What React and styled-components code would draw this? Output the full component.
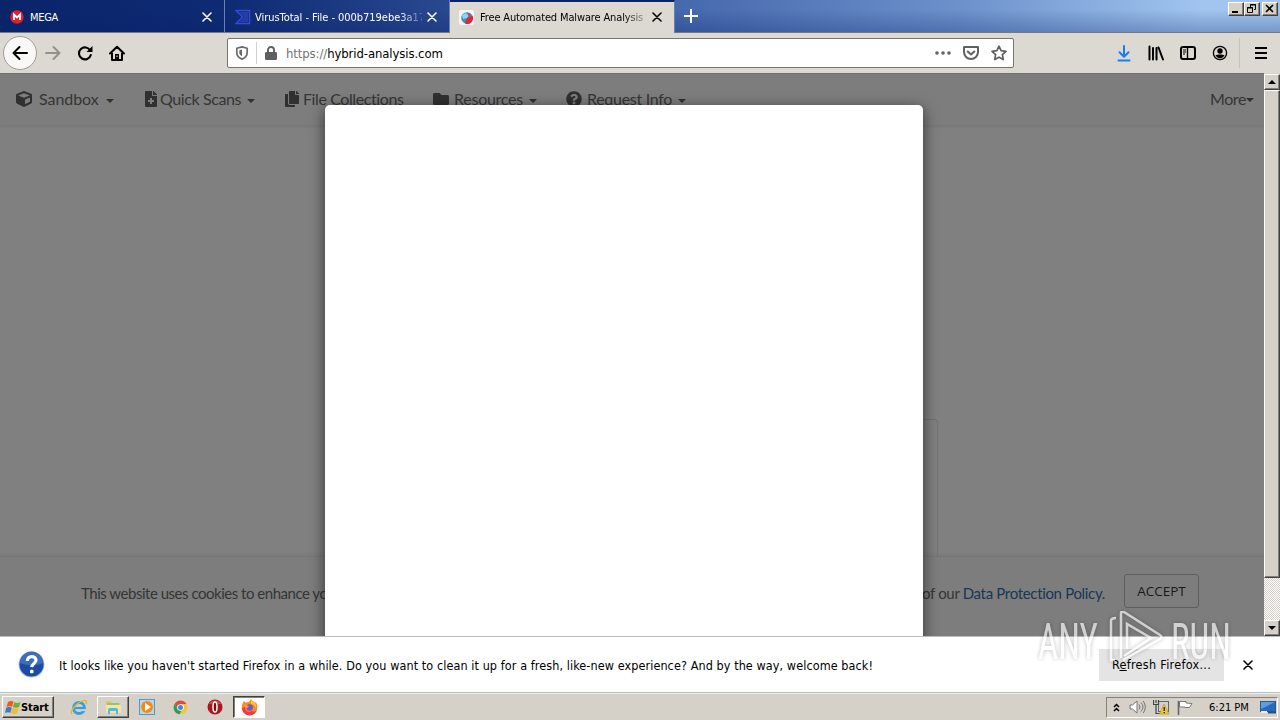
import React from "react";
import styled, { createGlobalStyle } from "styled-components";
import {
  FaCube,
  FaFileMedical,
  FaCopy,
  FaFolder,
  FaQuestionCircle,
} from "react-icons/fa";

const NAV = [
  { label: "Sandbox", icon: <FaCube />, width: 127, gap: 22, text: 67, spacing: -0.05, caret: true },
  { label: "Quick Scans", icon: <FaFileMedical />, width: 141, gap: 16, text: 87, spacing: -0.4, caret: true },
  { label: "File Collections", icon: <FaCopy />, width: 149, gap: 18, text: 110, spacing: -0.4 },
  { label: "Resources", icon: <FaFolder />, width: 133, gap: 20, text: 75, spacing: -0.25, caret: true },
  { label: "Request Info", icon: <FaQuestionCircle />, width: 130, gap: 20, text: 91, spacing: -0.3, caret: true },
];

const Cross = ({ color = "#000" }) => (
  <svg width="10" height="10" viewBox="0 0 10 10">
    <path d="M1 1l8 8M9 1L1 9" stroke={color} strokeWidth="1.6" strokeLinecap="round" />
  </svg>
);

const MegaIcon = () => (
  <svg width="14" height="14" viewBox="0 0 14 14">
    <circle cx="7" cy="7" r="6.7" fill="#e3202c" />
    <path d="M4 10V4.5l3 3 3-3V10" fill="none" stroke="#fff" strokeWidth="1.9" />
  </svg>
);

const VirusTotalIcon = () => (
  <svg width="16" height="16" viewBox="0 0 16 16">
    <path d="M1 1.500h13.500v13H1L7.500 8z" fill="none" stroke="#3447e0" strokeWidth="1.500" />
    <path d="M4 3h9v10H4l5-5z" fill="#22409c" />
  </svg>
);

const HybridIcon = () => (
  <svg width="15" height="15" viewBox="0 0 15 15">
    <rect width="15" height="15" rx="2" fill="#f1f5f8" />
    <circle cx="8" cy="8" r="5.8" fill="#368fc7" />
    <path d="M8 8l5.500-2.300A5.800 5.800 0 0 1 6 13.500z" fill="#e32632" />
    <path d="M3 5l4-2 3 2-2 3-4 1z" fill="#91d4eb" />
    <path d="M8 3l4 1-2 3z" fill="#d33c51" />
  </svg>
);

const BackIcon = () => (
  <svg width="16" height="16" viewBox="0 0 16 16">
    <path d="M15 8H1.5M7.5 2l-6 6 6 6" fill="none" stroke="currentColor" strokeWidth="2" strokeLinecap="round" strokeLinejoin="round" />
  </svg>
);

const ForwardIcon = () => (
  <svg width="16" height="16" viewBox="0 0 16 16">
    <path d="M1 8h13.5M8.5 2l6 6-6 6" fill="none" stroke="#92908d" strokeWidth="2" strokeLinecap="round" strokeLinejoin="round" />
  </svg>
);

const ReloadIcon = () => (
  <svg width="16" height="16" viewBox="0 0 16 16">
    <path d="M13.3 5.5A6 6 0 1 0 13.8 10" fill="none" stroke="#000" strokeWidth="2.1" strokeLinecap="round" />
    <path d="M15.5 1v6h-6z" fill="#000" />
  </svg>
);

const HomeIcon = () => (
  <svg width="16" height="16" viewBox="0 0 16 16">
    <path d="M1 8.5L8 1.7l7 6.8M3 8v6.9h10V8" fill="none" stroke="#000" strokeWidth="2" strokeLinecap="round" strokeLinejoin="round" />
    <path d="M6 9h4v6H6z" fill="#000" />
    <path d="M7.4 10.5h1.2V12H7.4z" fill="#dcd9d3" />
  </svg>
);

const ShieldIcon = () => (
  <svg width="14" height="14" viewBox="0 0 14 14">
    <path d="M7 .9l5.2 1.3v4.3c0 3.2-2.5 5.5-5.2 6.6C4.3 12 1.8 9.7 1.8 6.5V2.2z" fill="none" stroke="#6a6a6a" strokeWidth="1.7" strokeLinejoin="round" />
    <path d="M7 3.6v6.6C5.3 9.2 4.3 8 4.3 6.4V4.2z" fill="#6a6a6a" />
  </svg>
);

const LockIcon = () => (
  <svg width="12" height="14" viewBox="0 0 12 14">
    <path d="M3 6.5V4a3 3 0 0 1 6 0v2.5" fill="none" stroke="#5f5f5f" strokeWidth="1.9" />
    <rect y="6" width="12" height="8" rx="1.3" fill="#5f5f5f" />
  </svg>
);

const DotsIcon = () => (
  <svg width="16" height="16" viewBox="0 0 16 16" fill="#636363">
    <circle cx="2" cy="8" r="1.8" />
    <circle cx="8" cy="8" r="1.8" />
    <circle cx="14" cy="8" r="1.8" />
  </svg>
);

const PocketIcon = () => (
  <svg width="16" height="16" viewBox="0 0 16 16">
    <path d="M1 2h14v5a7 7 0 0 1-14 0z" fill="none" stroke="#606060" strokeWidth="2" strokeLinejoin="round" />
    <path d="M4.7 6.5L8 9.5l3.3-3" fill="none" stroke="#606060" strokeWidth="2" strokeLinecap="round" strokeLinejoin="round" />
  </svg>
);

const StarIcon = () => (
  <svg width="16" height="16" viewBox="0 0 16 16">
    <path d="M8 1.2l2.1 4.5 4.9.6-3.6 3.4.9 4.9L8 12.2l-4.3 2.4.9-4.9L1 6.3l4.9-.6z" fill="none" stroke="#606060" strokeWidth="1.7" strokeLinejoin="round" />
  </svg>
);

const DownloadIcon = () => (
  <svg width="16" height="17" viewBox="0 0 16 17">
    <path d="M8 1v10.500M3.500 7.300L8 11.700l4.500-4.400M2.500 15.500h11" fill="none" stroke="#157fec" strokeWidth="2" strokeLinecap="round" strokeLinejoin="round" />
  </svg>
);

const LibraryIcon = () => (
  <svg width="16" height="16" viewBox="0 0 16 16">
    <path d="M1.500 1.500v13M5 3v11.500M8.500 3v11.500M10.500 2.500l4.500 12" fill="none" stroke="#000" strokeWidth="2" strokeLinecap="round" />
  </svg>
);

const SidebarIcon = () => (
  <svg width="16" height="16" viewBox="0 0 16 16">
    <rect x="1" y="2" width="14" height="12" rx="2" fill="none" stroke="#000" strokeWidth="2" />
    <path d="M7.5 2v12" stroke="#000" strokeWidth="1.4" />
    <path d="M3 5h3M3 7h3M3 9h2" stroke="#000" />
  </svg>
);

const AccountIcon = () => (
  <svg width="16" height="16" viewBox="0 0 16 16">
    <circle cx="8" cy="8" r="6.6" fill="none" stroke="#000" strokeWidth="1.3" />
    <circle cx="8" cy="6" r="2.7" />
    <path d="M3.5 10.2c2-1 7-1 9 0-1 2-2.600 3-4.500 3s-3.500-1-4.500-3z" />
  </svg>
);

const MenuIcon = () => (
  <svg width="12" height="12" viewBox="0 0 12 12">
    <path d="M0 1h12M0 6h12M0 11h12" stroke="#000" strokeWidth="2" />
  </svg>
);

const QuestionIcon = () => (
  <svg width="27" height="27" viewBox="0 0 27 27">
    <circle cx="13.5" cy="13.5" r="13" fill="#a9b9d9" />
    <circle cx="13.5" cy="13.5" r="12" fill="#1c4ba5" />
    <path d="M2 12a11.500 11.500 0 0 1 23 0c-7 3-15 3-23 0z" fill="#3d6cbe" />
    <path d="M9.300 10c0-6 8.700-5.500 8.700-.8 0 3-4 3.300-4.300 7" fill="none" stroke="#fff" strokeWidth="3.200" />
    <rect x="12" y="18.800" width="3.500" height="3.500" rx="1" fill="#fff" />
  </svg>
);

const WindowsIcon = () => (
  <svg width="16" height="15" viewBox="0 0 16 15">
    <path d="M3 2c2-1.500 4-1.200 5.500-.2L7 6.800C5 5.800 3.500 6 1.500 7z" fill="#ea5b22" />
    <path d="M9.300 2.200c2 1 4 1 6.200-.2L14 7c-2 1-4 1-6.200 0z" fill="#70ae37" />
    <path d="M1.300 7.800c2-1 3.700-1 5.500 0l-1.500 5C3.700 12 2 12 0 13z" fill="#3c78c3" />
    <path d="M7.500 8c2 1 4 1 6.200 0l-1.500 5c-2 1.300-4 1.200-6.200.1z" fill="#f1bd2b" />
  </svg>
);

const ExplorerIcon = () => (
  <svg width="18" height="17" viewBox="0 0 18 17">
    <circle cx="9" cy="9" r="5.5" fill="none" stroke="#35a0df" strokeWidth="2.8" />
    <path d="M4 9h11" stroke="#35a0df" strokeWidth="2.2" />
    <path d="M12 10.100h5v2h-5z" fill="#d5d0c8" />
    <path d="M2 15C-1 12 9 1 15.500 1.700c1.500.2 1 2.300.5 3.300" fill="none" stroke="#e6b52d" strokeWidth="1.400" />
  </svg>
);

const FolderIcon = () => (
  <svg width="16" height="16" viewBox="0 0 16 16">
    <path d="M1 2h5l1 2h8v10H1z" fill="#e4c760" />
    <path d="M2 4h12v3H2z" fill="#8bc681" />
    <path d="M1 6h15v8H1z" fill="#f5e59e" />
    <path d="M3 15v-4q0-2 2-2h6q2 0 2 2v4h-2v-3H5v3z" fill="#4ebce0" />
  </svg>
);

const MediaIcon = () => (
  <svg width="16" height="16" viewBox="0 0 16 16">
    <rect x=".5" y=".5" width="15" height="15" fill="#b6d8ee" stroke="#5895c6" />
    <circle cx="8" cy="8" r="6" fill="#ef8b16" />
    <path d="M6 4l6 4-6 4z" fill="#fff" />
  </svg>
);

const ChromeIcon = () => (
  <svg width="15" height="15" viewBox="0 0 15 15">
    <circle cx="7.5" cy="7.5" r="6.8" fill="#f6c52c" />
    <path d="M1.600 4.100a6.800 6.800 0 0 1 11.900 0H7.500L5 9z" fill="#dc4b3f" />
    <path d="M1.600 4.100L5 9.500l3.600.8-2 3.900C1.500 13.700-.8 8.400 1.600 4.100z" fill="#2c9e5b" />
    <circle cx="7.5" cy="7.5" r="3.3" fill="#fff" />
    <circle cx="7.5" cy="7.5" r="2.5" fill="#4285e8" />
  </svg>
);

const OperaIcon = () => (
  <svg width="16" height="16" viewBox="0 0 16 16">
    <circle cx="8" cy="8" r="7.5" fill="#b0151c" />
    <path d="M2 5a7 7 0 0 1 12 0z" fill="#c94a4c" />
    <ellipse cx="8" cy="8" rx="2" ry="5" fill="#84090f" stroke="#fff" strokeWidth="1.5" />
  </svg>
);

const FirefoxIcon = () => (
  <svg width="17" height="17" viewBox="0 0 17 17">
    <path d="M3 2l1.500 1.500L8 3l2-3c1 2 3 2 4 4l1-1c2 4 2 8-1 11-3 3-8 3-11 0S0 6 3 2z" fill="#ff8a22" />
    <path d="M1 9c1 9 12 10 15 2-2 2-3 2-5 1-4 2-7 0-7-4z" fill="#f33847" />
    <circle cx="8.7" cy="8.5" r="3.2" fill="#7651cf" />
    <path d="M10 0c1 3 6 4 5 9-1-3-3-4-5-4z" fill="#ffcb35" />
    <path d="M3 6c3 0 4 1 5 2L5 9z" fill="#ffad30" />
  </svg>
);

const UpIcon = () => (
  <svg width="7" height="9" viewBox="0 0 7 9">
    <path d="M1 4l2.500-2.500L6 4M1 8l2.500-2.500L6 8" fill="none" stroke="#000" strokeWidth="1.500" />
  </svg>
);

const SpeakerIcon = () => (
  <svg width="17" height="14" viewBox="0 0 17 14">
    <path d="M1 5h2.500L8 1v12L3.500 9H1z" fill="#fff" stroke="#777" />
    <path d="M10 4.500q2 2.500 0 5M12 2.500q4 4.500 0 9M14.300 1q4 6 0 12" fill="none" stroke="#777" />
  </svg>
);

const NetworkIcon = () => (
  <svg width="17" height="16" viewBox="0 0 17 16">
    <rect x="5.500" y="2.500" width="10" height="10" fill="#cfd0d1" stroke="#666" />
    <path d="M.5 1v4.500h5V1M3 1v3M3 6v8.500h4" fill="none" stroke="#444" strokeWidth="1.200" />
    <path d="M11 5l5 10H6.500z" fill="#f5cb23" stroke="#b98e0a" strokeWidth=".6" />
    <path d="M11.200 8v4m0 1v1.300" stroke="#222" strokeWidth="1.300" />
  </svg>
);

const FlagIcon = () => (
  <svg width="16" height="15" viewBox="0 0 16 15">
    <path d="M1.500 1v14" stroke="#666" strokeWidth="1.600" />
    <path d="M2.500 1.500H9V3l6 .5-2.500 4H8V7H2.500z" fill="#fff" stroke="#777" />
  </svg>
);

const DesktopIcon = () => (
  <svg width="16" height="13" viewBox="0 0 16 13">
    <rect x=".5" y=".5" width="15" height="10" fill="#286ac0" stroke="#31598d" />
    <path d="M1 1h14L1 8z" fill="#609de0" />
    <path d="M1 10h6v2H1z" fill="#e7eef4" />
    <path d="M8 10.500h8v2H8z" fill="#264d84" />
  </svg>
);

const PlayMark = () => (
  <svg width="54" height="52" viewBox="0 0 54 52">
    <path d="M6 49H2V10q0-3 5-3M12 47V2q0-2 3-1l36 23q3 2 0 4L14 49M18 38V13l24 14L15 45" fill="none" stroke="#fff" strokeWidth="2.500" />
  </svg>
);

const App = () => {
  return (
    <S.Screen>
      <GlobalStyle />
      <S.TabBar>
        <S.Tab $pad={10}>
          <S.TabIcon $width={20}><MegaIcon /></S.TabIcon>
          <S.TabTitle $spacing={-0.3}>MEGA</S.TabTitle>
          <Cross color="#fff" />
        </S.Tab>
        <S.Tab $pad={10}>
          <S.TabIcon $width={20}><VirusTotalIcon /></S.TabIcon>
          <S.TabTitle $spacing={-0.04} $fade>VirusTotal - File - 000b719ebe3a17</S.TabTitle>
          <Cross color="#fff" />
        </S.Tab>
        <S.Tab $pad={9} $active>
          <S.TabIcon $width={21}><HybridIcon /></S.TabIcon>
          <S.TabTitle $spacing={-0.14} $fade>Free Automated Malware Analysis</S.TabTitle>
          <Cross />
        </S.Tab>
        <S.NewTab>
          <svg width="14" height="14" viewBox="0 0 14 14">
            <path d="M7 0v14M0 7h14" stroke="#fff" strokeWidth="2" />
          </svg>
        </S.NewTab>
        <S.WindowButtons>
          <S.WindowButton>
            <svg width="14" height="12"><path d="M3 9h6" stroke="#000" strokeWidth="2" /></svg>
          </S.WindowButton>
          <S.WindowButton>
            <svg width="14" height="12" fill="none" stroke="#000">
              <path d="M5.500 4V1.500h5v5H9M5 2h6M2.500 4.500h5v5h-5zM2 5h6" />
            </svg>
          </S.WindowButton>
          <S.WindowButton $gap={2}>
            <svg width="14" height="12"><path d="M3 2l7 7M10 2L3 9" stroke="#000" strokeWidth="1.600" /></svg>
          </S.WindowButton>
        </S.WindowButtons>
      </S.TabBar>

      <S.Toolbar>
        <S.BackButton><BackIcon /></S.BackButton>
        <S.NavButtons>
          <ForwardIcon />
          <ReloadIcon />
          <HomeIcon />
        </S.NavButtons>
        <S.UrlBar>
          <S.Shield><ShieldIcon /></S.Shield>
          <LockIcon />
          <S.Url><span>https://</span>hybrid-analysis.com</S.Url>
          <S.UrlActions>
            <DotsIcon />
            <PocketIcon />
            <StarIcon />
          </S.UrlActions>
        </S.UrlBar>
        <S.ToolbarActions>
          <DownloadIcon />
          <LibraryIcon />
          <SidebarIcon />
          <AccountIcon />
        </S.ToolbarActions>
        <S.MenuButton><MenuIcon /></S.MenuButton>
      </S.Toolbar>

      <S.Content>
        <S.Page>
          <S.Nav>
            {NAV.map(item => (
              <S.NavItem key={item.label} $width={item.width}>
                <S.NavIcon $width={item.gap}>{item.icon}</S.NavIcon>
                <S.NavLabel $width={item.text} $spacing={item.spacing}>{item.label}</S.NavLabel>
                {item.caret && <S.Caret />}
              </S.NavItem>
            ))}
            <S.More>More<S.Caret /></S.More>
          </S.Nav>
          <S.PageBody>
            <S.UploadBox />
          </S.PageBody>
          <S.CookieBar>
            <S.CookieText>This website uses cookies to enhance yo</S.CookieText>
            <S.PolicyText>of our <b>Data Protection Policy</b>.</S.PolicyText>
            <S.Accept>ACCEPT</S.Accept>
          </S.CookieBar>
          <S.Modal />
        </S.Page>
        <S.Scrollbar>
          <S.ScrollButton>
            <svg width="8" height="4"><path d="M4 0l4 4H0z" /></svg>
          </S.ScrollButton>
          <S.Thumb />
          <S.Track />
          <S.ScrollButton>
            <svg width="8" height="4"><path d="M0 0h8L4 4z" /></svg>
          </S.ScrollButton>
        </S.Scrollbar>
      </S.Content>

      <S.Notification>
        <QuestionIcon />
        <S.Message>
          It looks like you haven't started Firefox in a while. Do you want to clean it up for a fresh, like-new experience? And by the way, welcome back!
        </S.Message>
        <S.Refresh>R<u>e</u>fresh Firefox...</S.Refresh>
        <Cross />
      </S.Notification>

      <S.Taskbar>
        <S.Start><WindowsIcon /><span>Start</span></S.Start>
        <S.TaskItem $width={33} $gap={8}><ExplorerIcon /></S.TaskItem>
        <S.TaskItem $width={32} $gap={2} $look="open"><FolderIcon /></S.TaskItem>
        <S.TaskItem $width={33} $gap={1}><MediaIcon /></S.TaskItem>
        <S.TaskItem $width={33} $gap={1}><ChromeIcon /></S.TaskItem>
        <S.TaskItem $width={33} $gap={1}><OperaIcon /></S.TaskItem>
        <S.TaskItem $width={32} $gap={2} $look="active"><FirefoxIcon /></S.TaskItem>
        <S.Tray>
          <UpIcon />
          <S.TrayIcons>
            <SpeakerIcon />
            <NetworkIcon />
            <FlagIcon />
          </S.TrayIcons>
          <S.Clock>6:21 PM</S.Clock>
          <DesktopIcon />
        </S.Tray>
      </S.Taskbar>

      <S.Watermark>
        <S.WatermarkText>ANY</S.WatermarkText>
        <PlayMark />
        <S.WatermarkText>RUN</S.WatermarkText>
      </S.Watermark>
    </S.Screen>
  );
};

const GlobalStyle = createGlobalStyle`
  * { box-sizing: border-box; }
  body { margin: 0; overflow: hidden; }
  svg { display: block; flex: none; }
`;

const bevel = `
  border: 1px solid;
  border-color: #fff #404040 #404040 #fff;
  box-shadow: inset -1px -1px #85817a;
  background: #d5d0c8;
`;

const S = {
  Screen: styled.div`
    position: relative;
    width: 1280px;
    height: 720px;
    display: flex;
    flex-direction: column;
    overflow: hidden;
    background: #fff;
    color: #000;
    font-family: "DejaVu Sans Condensed", "DejaVu Sans", sans-serif;
    font-stretch: condensed;
    font-size: 11px;
    white-space: nowrap;
  `,
  TabBar: styled.div`
    height: 33px;
    flex: none;
    display: flex;
    border-bottom: 1px solid #77797f;
    background: linear-gradient(#0000 0 30%, #08206845), linear-gradient(90deg, #0a246a 0, #0e2b73 18%, #4668ad 53%, #6c91cb 75%, #a1c5ef 94%, #a0c4ed);
  `,
  Tab: styled.div`
    width: 225px;
    height: ${({ $active }) => ($active ? 33 : 32)}px;
    display: flex;
    align-items: center;
    padding: ${({ $active }) => ($active ? 0 : 2)}px 12px ${({ $active }) => ($active ? 1 : 0)}px ${({ $pad }) => $pad}px;
    color: ${({ $active }) => ($active ? "#000" : "#fff")};
    background: ${({ $active }) => ($active ? "#dcd9d3" : "transparent")};
    border-top: ${({ $active }) => ($active ? "2px solid #0a246a" : "0")};
    border-right: 1px solid #6980b0;
  `,
  TabIcon: styled.div`
    width: ${({ $width }) => $width}px;
    flex: none;
  `,
  TabTitle: styled.div`
    flex: 1;
    min-width: 0;
    margin-right: 5px;
    overflow: hidden;
    letter-spacing: ${({ $spacing }) => $spacing}px;
    mask-image: ${({ $fade }) => ($fade ? "linear-gradient(90deg, #000 86%, #0003)" : "none")};
  `,
  NewTab: styled.div`
    padding: 9px 0 0 9px;
  `,
  WindowButtons: styled.div`
    display: flex;
    margin: 2px 2px 0 auto;
  `,
  WindowButton: styled.div`
    width: 16px;
    height: 14px;
    margin-left: ${({ $gap }) => $gap || 0}px;
    ${bevel}
  `,
  Toolbar: styled.div`
    height: 40px;
    flex: none;
    display: flex;
    align-items: center;
    background: #dcd9d3;
  `,
  BackButton: styled.div`
    width: 34px;
    height: 34px;
    margin-left: 3px;
    display: flex;
    align-items: center;
    justify-content: center;
    border: 1px solid #a09e9b;
    border-radius: 50%;
    background: #f9f8f7;
  `,
  NavButtons: styled.div`
    width: 190px;
    display: flex;
    gap: 16px;
    padding-left: 8px;
  `,
  UrlBar: styled.div`
    width: 787px;
    height: 30px;
    display: flex;
    align-items: center;
    padding: 0 6px 0 7px;
    border: 1px solid #777570;
    border-radius: 2px;
    background: #fff;
  `,
  Shield: styled.div`
    width: 22px;
    height: 22px;
    margin-right: 8px;
    padding-top: 4px;
    border-right: 1px solid #d0d0d0;
  `,
  Url: styled.div`
    margin-left: 9px;
    font-size: 13px;
    letter-spacing: -0.1px;

    span { color: #737373; }
  `,
  UrlActions: styled.div`
    display: flex;
    gap: 12px;
    margin-left: auto;
  `,
  ToolbarActions: styled.div`
    display: flex;
    gap: 16px;
    margin-left: 102px;
  `,
  MenuButton: styled.div`
    height: 30px;
    display: flex;
    align-items: center;
    margin-left: 11px;
    padding-left: 15px;
    border-left: 1px solid #c5c1bb;
  `,
  Content: styled.div`
    height: 563px;
    flex: none;
    display: flex;
  `,
  Page: styled.div`
    position: relative;
    width: 1264px;
    display: flex;
    flex-direction: column;
    overflow: hidden;
    background: #808080;
    border-top: 1px solid #6f6f6e;
    color: #353535;
    font-family: Lato, sans-serif;
    font-stretch: normal;
  `,
  Nav: styled.div`
    height: 51px;
    flex: none;
    display: flex;
    align-items: center;
    padding: 0 10px 1px 17px;
    background: #7d7d7d;
    box-shadow: 0 1px 3px #747474;
    font-size: 16px;
  `,
  NavItem: styled.div`
    width: ${({ $width }) => $width}px;
    display: flex;
    align-items: center;
  `,
  NavIcon: styled.div`
    width: ${({ $width }) => $width}px;
    flex: none;
    color: #303030;

    svg { margin-left: -1px; }
  `,
  NavLabel: styled.div`
    width: ${({ $width }) => $width}px;
    flex: none;
    padding-bottom: 1px;
    letter-spacing: ${({ $spacing }) => $spacing}px;
  `,
  Caret: styled.i`
    border: 4px solid transparent;
    border-top-color: #303030;
    border-bottom: 0;
    margin-top: 3px;
  `,
  More: styled.div`
    display: flex;
    align-items: center;
    margin-left: auto;
    padding-bottom: 1px;
    letter-spacing: -0.4px;
  `,
  PageBody: styled.div`
    flex: 1;
    display: flex;
    align-items: flex-end;
    justify-content: center;
  `,
  UploadBox: styled.div`
    width: 612px;
    height: 137px;
    border: 1px solid #737373;
    border-bottom: 0;
    border-radius: 4px 4px 0 0;
  `,
  CookieBar: styled.div`
    height: 80px;
    flex: none;
    display: flex;
    align-items: center;
    padding: 0 65px 7px 81px;
    background: #7d7d7d;
    border-top: 1px solid #767676;
    box-shadow: 0 -1px 3px #787878;
    font-size: 15px;
  `,
  CookieText: styled.div`
    width: 841px;
    letter-spacing: -0.48px;
  `,
  PolicyText: styled.div`
    width: 202px;
    letter-spacing: -0.33px;

    b { font-weight: 400; color: #173754; }
  `,
  Accept: styled.div`
    width: 75px;
    height: 34px;
    margin-bottom: 4px;
    line-height: 33px;
    text-align: center;
    border: 1px solid #5e5e5e;
    border-radius: 3px;
    color: #191919;
    font-family: "Open Sans", sans-serif;
    font-size: 13.5px;
  `,
  /* dialog lies over the dimmed page */
  Modal: styled.div`
    position: absolute;
    left: 325px;
    top: 31px;
    width: 598px;
    height: 540px;
    border-radius: 5px;
    background: #fff;
    box-shadow: 0 4px 15px #0009;
  `,
  Scrollbar: styled.div`
    width: 16px;
    display: flex;
    flex-direction: column;
    padding-top: 1px;
    background: #d5d0c8;
  `,
  ScrollButton: styled.div`
    height: 16px;
    flex: none;
    display: flex;
    align-items: center;
    justify-content: center;
    ${bevel}
  `,
  Thumb: styled.div`
    height: 488px;
    ${bevel}
  `,
  Track: styled.div`
    flex: 1;
    background: repeating-conic-gradient(#fff 0 25%, #d5d0c8 0 50%) 0 0 / 2px 2px;
  `,
  Notification: styled.div`
    height: 57px;
    flex: none;
    display: flex;
    align-items: center;
    padding-left: 18px;
    border-top: 1px solid #bcbcbc;
    border-bottom: 1px solid #b6bec7;
    background: #fff;
  `,
  Message: styled.div`
    width: 1040px;
    margin-left: 14px;
    padding-top: 1px;
    font-size: 12.5px;
    letter-spacing: 0.09px;
  `,
  Refresh: styled.div`
    width: 125px;
    height: 32px;
    margin-right: 19px;
    line-height: 31px;
    text-align: center;
    background: #e4e4e4;
    font-size: 12.5px;
    letter-spacing: 0.3px;
  `,
  Taskbar: styled.div`
    height: 27px;
    flex: none;
    display: flex;
    align-items: center;
    padding: 0 2px;
    border-top: 1px solid #f1efeb;
    background: #d5d0c8;
  `,
  Start: styled.div`
    width: 52px;
    height: 22px;
    display: flex;
    align-items: center;
    padding-left: 2px;
    ${bevel}

    span {
      font-weight: 700;
      font-size: 11px;
      letter-spacing: -0.1px;
    }
  `,
  TaskItem: styled.div`
    width: ${({ $width }) => $width}px;
    height: 22px;
    margin-left: ${({ $gap }) => $gap}px;
    display: flex;
    align-items: center;
    justify-content: center;
    ${({ $look }) => $look === "open" && bevel}
    ${({ $look }) =>
      $look === "active" &&
      `
        border: 1px solid;
        border-color: #404040 #fff #fff #404040;
        box-shadow: inset 1px 1px #85817a;
        background: #fff;
      `}
  `,
  Tray: styled.div`
    width: 172px;
    height: 21px;
    margin-left: auto;
    display: flex;
    align-items: center;
    padding-left: 6px;
    border: 1px solid;
    border-color: #85817a #fff #fff #85817a;
  `,
  TrayIcons: styled.div`
    display: flex;
    align-items: center;
    gap: 7px;
    margin-left: 9px;
  `,
  Clock: styled.div`
    width: 51px;
    margin-left: 16px;
  `,
  /* floats above the whole desktop */
  Watermark: styled.div`
    position: absolute;
    left: 1038px;
    top: 607px;
    display: flex;
    align-items: center;
    gap: 8px;
    opacity: 0.65;
    filter: drop-shadow(0 0 2px #0006);
    pointer-events: none;
  `,
  WatermarkText: styled.div`
    width: 63px;
    padding-top: 10px;
    color: #fff;
    font-family: Roboto, sans-serif;
    font-size: 50px;
    line-height: 50px;
    transform: scaleX(0.7);
    transform-origin: left;
  `,
};

export default App;
